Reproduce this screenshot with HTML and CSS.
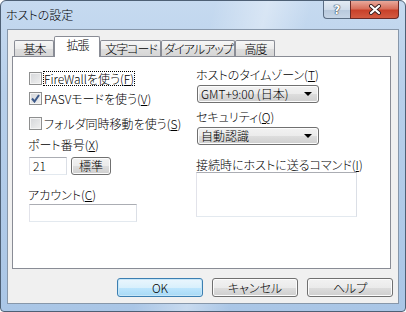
FILE: index.html
```html
<!DOCTYPE html>
<html lang="ja">
<head>
    <meta charset="UTF-8">
    <title>ホストの設定</title>
    <link rel="stylesheet" href="styles.css">
</head>
<body>
    <div class="window">
        <div class="titlebar">
            <span class="title">ホストの設定</span>
            <div class="caption">
                <div class="cap-help">?</div>
                <div class="cap-close">
                    <svg width="14" height="11" viewBox="0 0 14 11">
                        <path d="M3 2 L11 9 M11 2 L3 9" stroke="#3a2020" stroke-width="4" stroke-linecap="round"/>
                        <path d="M3 2 L11 9 M11 2 L3 9" stroke="#fff" stroke-width="2.2" stroke-linecap="round"/>
                    </svg>
                </div>
            </div>
        </div>

        <div class="client">
            <div class="tabs">
                <div class="tab w40">基本</div>
                <div class="tab active w46">拡張</div>
                <div class="tab w61">文字コード</div>
                <div class="tab w74">ダイアルアップ</div>
                <div class="tab w40">高度</div>
            </div>

            <div class="panel">
                <div class="col-left">
                    <div class="check first">
                        <span class="box"></span>
                        <span class="label focus">FireWallを使う(<u>F</u>)</span>
                    </div>
                    <div class="check second">
                        <span class="box">
                            <svg width="9" height="9" viewBox="0 0 9 9">
                                <path d="M1 4.5 L3.5 7.5 L8 1" fill="none" stroke="#3d5a8a" stroke-width="2"/>
                            </svg>
                        </span>
                        <span class="label">PASVモードを使う(<u>V</u>)</span>
                    </div>
                    <div class="check third">
                        <span class="box"></span>
                        <span class="label">フォルダ同時移動を使う(<u>S</u>)</span>
                    </div>

                    <div class="text port-label">ポート番号(<u>X</u>)</div>
                    <div class="port-row">
                        <div class="edit port">21</div>
                        <div class="btn small">標準</div>
                    </div>

                    <div class="text account-label">アカウント(<u>C</u>)</div>
                    <div class="edit account"></div>
                </div>

                <div class="col-right">
                    <div class="text tz-label">ホストのタイムゾーン(<u>T</u>)</div>
                    <div class="combo">
                        <span>GMT+9:00 (日本)</span>
                        <span class="arrow"></span>
                    </div>
                    <div class="text sec-label">セキュリティ(<u>Q</u>)</div>
                    <div class="combo">
                        <span>自動認識</span>
                        <span class="arrow"></span>
                    </div>
                    <div class="text cmd-label">接続時にホストに送るコマンド(<u>I</u>)</div>
                    <div class="edit memo"></div>
                </div>
            </div>

            <div class="buttons">
                <div class="btn default">OK</div>
                <div class="btn">キャンセル</div>
                <div class="btn">ヘルプ</div>
            </div>
        </div>
    </div>
</body>
</html>
```

FILE: styles.css
```css
body {
    margin: 0;
    background: #fff;
}
.window {
    width: 406px;
    height: 312px;
    box-sizing: border-box;
    border: 1px solid #4e6075;
    border-radius: 6px 6px 4px 4px;
    overflow: hidden;
    display: flex;
    flex-direction: column;
    font-family: "Noto Sans CJK JP", sans-serif;
    font-feature-settings: "palt";
    font-weight: 300;
    font-size: 12px;
    color: #000;
    white-space: nowrap;
    background:
        linear-gradient(105deg, rgba(255,255,255,0) 44%, rgba(255,255,255,0.35) 55%, rgba(255,255,255,0) 64%),
        linear-gradient(to bottom, #c6daf0 0%, #b7cfea 30%, #aac6e6 100%);
}
.titlebar {
    height: 28px;
    display: flex;
    align-items: flex-start;
}
.title {
    line-height: 28px;
    padding-left: 5px;
    font-size: 12px;
}
.caption {
    margin-left: auto;
    margin-right: 6px;
    display: flex;
}
.cap-help,
.cap-close {
    height: 18px;
    box-sizing: border-box;
    border: 1px solid #5b6d83;
    border-top: none;
    display: flex;
    align-items: center;
    justify-content: center;
}
.cap-help {
    width: 27px;
    border-radius: 0 0 0 4px;
    border-right: none;
    background: linear-gradient(to bottom, #e3ebf4 0%, #d0dcea 50%, #b7c8dc 51%, #c6d5e6 100%);
    color: #fff;
    font-family: "DejaVu Sans", sans-serif;
    font-weight: bold;
    font-size: 12px;
    text-shadow: 0 0 1px #2f3b4b, 0 0 1px #2f3b4b, 0 0 1px #2f3b4b;
}
.cap-close {
    width: 49px;
    border-color: #6b2a26;
    border-radius: 0 0 4px 0;
    background: linear-gradient(to bottom, #e9a99b 0%, #d8705c 45%, #c8412a 55%, #d35a41 100%);
}

/* クライアント領域 */
.client {
    flex: 1;
    margin: 0 6px 7px 6px;
    border: 1px solid #8797aa;
    background: #f0f0f0;
    padding: 6px 6px 0 4px;
    display: flex;
    flex-direction: column;
}
.tabs {
    height: 21px;
    margin: 0 0 -1px 2px;
    display: flex;
    align-items: flex-end;
    position: relative;
    z-index: 1;
}
.tab {
    height: 16px;
    margin-bottom: 1px;
    box-sizing: border-box;
    border: 1px solid #898c95;
    border-bottom: none;
    border-radius: 2px 2px 0 0;
    background: linear-gradient(to bottom, #f7f7f7 0%, #ebebeb 50%, #dedede 51%, #d6d6d6 100%);
    line-height: 15px;
    text-align: center;
    letter-spacing: -1px;
    text-indent: 1px;
}
.tab.active {
    height: 21px;
    margin-bottom: 0;
    background: #fff;
}
.w40 { width: 40px; }
.w46 { width: 46px; }
.w61 { width: 61px; }
.w74 { width: 74px; }

.panel {
    height: 213px;
    margin-right: 1px;
    box-sizing: border-box;
    border: 1px solid #898c95;
    background: #fff;
    display: flex;
}
.col-left {
    width: 168px;
    padding-left: 15px;
    padding-top: 14px;
    display: flex;
    flex-direction: column;
    align-items: flex-start;
}
.col-right {
    padding-top: 10px;
    display: flex;
    flex-direction: column;
    align-items: flex-start;
}
.text {
    line-height: 15px;
}
u {
    text-decoration: underline;
}

/* チェックボックス */
.check {
    height: 15px;
    display: flex;
    align-items: center;
    margin-left: 1px;
}
.check.second { margin-top: 5px; }
.check.third { margin-top: 10px; }
.box {
    width: 13px;
    height: 13px;
    box-sizing: border-box;
    border: 1px solid #8e8f8f;
    background: linear-gradient(135deg, #d4d6d9 0%, #f0f0f0 100%);
    box-shadow: inset 0 0 0 1px #f4f4f4;
    display: flex;
    align-items: center;
    justify-content: center;
}
.label {
    margin-left: 1px;
    border: 1px dotted transparent;
    line-height: 13px;
}
.label.focus {
    border-color: #000;
}

.port-label { margin-top: 6px; }
.port-row {
    margin-top: 5px;
    margin-left: 1px;
    display: flex;
    gap: 4px;
}
.account-label { margin-top: 12px; }

.edit {
    height: 18px;
    box-sizing: border-box;
    border: 1px solid;
    border-color: #abadb3 #dbdfe6 #e3e9ef #e2e3ea;
    background: #fff;
    line-height: 16px;
    padding-left: 3px;
}
.edit.port { width: 38px; }
.edit.account {
    width: 108px;
    margin-top: 2px;
    margin-left: 1px;
}
.edit.memo {
    width: 161px;
    height: 45px;
}

/* ボタン */
.btn {
    width: 86px;
    height: 19px;
    box-sizing: border-box;
    border: 1px solid #707070;
    border-radius: 3px;
    background: linear-gradient(to bottom, #f2f2f2 0%, #ebebeb 50%, #dddddd 51%, #cfcfcf 100%);
    box-shadow: inset 0 0 0 1px #fcfcfc;
    text-align: center;
    line-height: 17px;
}
.btn.small {
    width: 40px;
    height: 18px;
    line-height: 16px;
}
.btn.default {
    border-color: #3c7fb1;
    background: linear-gradient(to bottom, #eaf6fd 0%, #d9f0fc 50%, #bee6fd 51%, #a7d9f5 100%);
    box-shadow: inset 0 0 0 1px #c6e6f8;
}
.buttons {
    margin-top: 9px;
    display: flex;
    justify-content: flex-end;
    gap: 9px;
    margin-right: -1px;
}

/* コンボボックス */
.combo {
    width: 122px;
    height: 18px;
    margin-top: 3px;
    margin-left: 1px;
    box-sizing: border-box;
    border: 1px solid #707070;
    border-radius: 3px;
    background: linear-gradient(to bottom, #f2f2f2 0%, #ebebeb 50%, #dddddd 51%, #cfcfcf 100%);
    box-shadow: inset 0 0 0 1px #fcfcfc;
    display: flex;
    align-items: center;
    padding-left: 3px;
    line-height: 16px;
}
.arrow {
    margin-left: auto;
    margin-right: 6px;
    width: 0;
    height: 0;
    border-left: 4px solid transparent;
    border-right: 4px solid transparent;
    border-top: 4px solid #000;
}
.sec-label { margin-top: 6px; }
.cmd-label { margin-top: 12px; }
```
